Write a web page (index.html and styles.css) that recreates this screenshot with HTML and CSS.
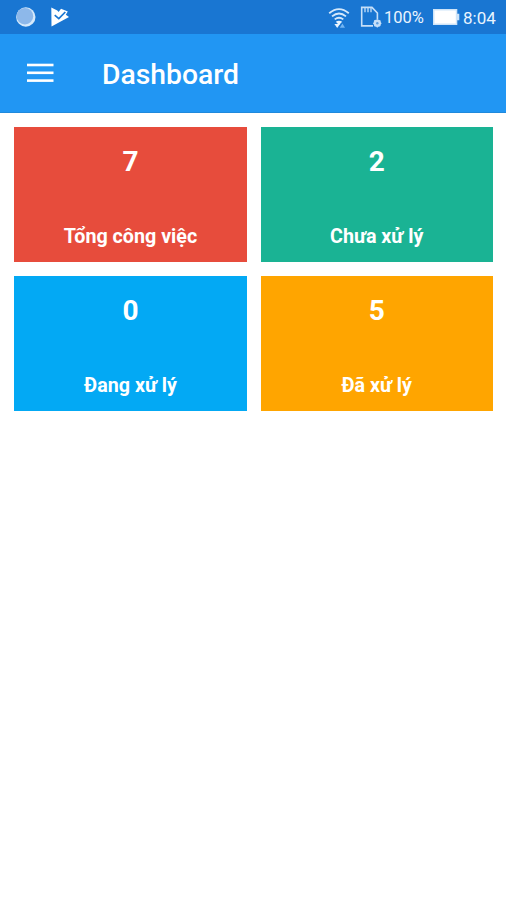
FILE: index.html
```html
<!DOCTYPE html>
<html lang="vi">
<head>
<meta charset="utf-8">
<title>Dashboard</title>
<link rel="stylesheet" href="styles.css">
</head>
<body>
<div class="status-bar">
  <svg class="status-left" width="60" height="34" viewBox="0 0 60 34">
    <circle cx="15.8" cy="17" r="9.7" fill="#d5e9fb"/>
    <circle cx="14.9" cy="16.2" r="8.3" fill="#8db8ea"/>
    <path d="M41.3 7.5 L47.3 10.6 L48.6 12 L51 8.8 L57.8 11.5 L55.8 14.8 L59 17 L41.5 26.5 Z" fill="#fff"/>
    <path d="M44.7 15.2 L48.8 18.6 L55.3 12" fill="none" stroke="#1976d2" stroke-width="1.7"/>
  </svg>
  <div class="status-right">
    <svg class="wifi" width="22" height="22" viewBox="0 0 22 22" fill="none" stroke="#d4e8fb" stroke-width="1.8">
      <path d="M1.2 6.2 Q11 -2 20.8 6.2"/>
      <path d="M4 9.4 Q11 3.6 18 9.4"/>
      <path d="M6.7 12.4 Q11 9 15.3 12.4"/>
      <path d="M7.8 14.8 Q11 12.6 14.2 14.8 L11 18 Z" fill="#e9f4fe" stroke="none"/>
      <path d="M6.4 17 H12 L9.2 21 Z" fill="#e9f4fe" stroke="none"/>
      <path d="M11.8 20.8 L14.4 16.6 L17 20.8 Z" fill="#73b5f2" stroke="none"/>
    </svg>
    <svg class="sd" width="22" height="24" viewBox="0 0 22 24" fill="none" stroke="#c6dff8" stroke-width="1.6">
      <path d="M13 20.9 H1.7 V2.4 H12 L17.4 8 V14"/>
      <path d="M5 3 V7.2 M8 3 V7.2 M11 3 V7.2" stroke-width="1.3"/>
      <circle cx="17.3" cy="18.3" r="2.6" stroke-width="2.2"/>
      <path d="M17.3 14.2 V22.4 M13.2 18.3 H21.4 M14.4 15.4 L20.2 21.2 M20.2 15.4 L14.4 21.2" stroke-width="1.2"/>
      <circle cx="17.3" cy="18.3" r="1.2" fill="#5d9fe0" stroke="none"/>
    </svg>
    <span class="percent">100%</span>
    <svg class="battery" width="27" height="18" viewBox="0 0 27 18">
      <path d="M0 1 H24.3 V5.8 H26.3 V12.2 H24.3 V17 H0 Z" fill="#cfe4f8"/>
      <rect x="1.5" y="2.5" width="21.3" height="13" fill="#fff"/>
    </svg>
    <span class="clock">8:04</span>
  </div>
</div>
<header class="app-bar">
  <svg class="menu" width="27" height="20" viewBox="0 0 27 20" fill="#fff">
    <rect y="0.7" width="26.5" height="2.6"/>
    <rect y="8.5" width="26.5" height="2.6"/>
    <rect y="16.3" width="26.5" height="2.6"/>
  </svg>
  <h1 class="title">Dashboard</h1>
</header>
<main class="cards">
  <section class="card total"><span class="count">7</span><span class="label">Tổng công việc</span></section>
  <section class="card pending"><span class="count">2</span><span class="label">Chưa xử lý</span></section>
  <section class="card active"><span class="count">0</span><span class="label">Đang xử lý</span></section>
  <section class="card done"><span class="count">5</span><span class="label">Đã xử lý</span></section>
</main>
</body>
</html>
```
FILE: styles.css
```css
* { box-sizing: border-box; }
body {
  margin: 0;
  height: 900px;
  background: #fff;
  font-family: Roboto, "Liberation Sans", sans-serif;
  color: #fff;
  overflow: hidden;
}
svg { display: block; flex: none; }
.status-bar {
  height: 34px;
  padding: 0 10px;
  background: #1976d2;
  display: flex;
  justify-content: space-between;
}
.status-right {
  display: flex;
  align-items: center;
  font-size: 17px;
  line-height: 34px;
  color: #e9f4fe;
  white-space: nowrap;
}
.wifi { margin: 2px 10px 0 0; }
.sd { margin: 0 2px 0 0; }
.percent { width: 40px; margin-right: 9px; padding-top: 2px; font-size: 16.5px; }
.battery { margin-right: 3px; }
.clock { width: 33px; padding-top: 1px; }
.app-bar {
  height: 79px;
  padding-left: 26.5px;
  background: #2196f3;
  border-bottom: 1px solid #2089dc;
  display: flex;
  align-items: center;
}
.title {
  margin: 4px 0 0 48.5px;
  font-size: 28.3px;
  line-height: 34px;
  font-weight: 500;
}
.cards {
  display: grid;
  grid-template-columns: 232.4px 232px;
  grid-auto-rows: 135px;
  gap: 14px;
  padding: 14px 14.3px;
}
.card {
  display: flex;
  flex-direction: column;
  align-items: center;
  justify-content: space-between;
  padding: 18px 0 12px;
  font-weight: 700;
}
.count { font-size: 28px; line-height: 34px; }
.label { font-size: 19.7px; line-height: 26px; }
.total { background: #e74c3c; }
.pending { background: #1ab394; }
.active { background: #03a9f4; }
.done { background: #ffa500; }
```
